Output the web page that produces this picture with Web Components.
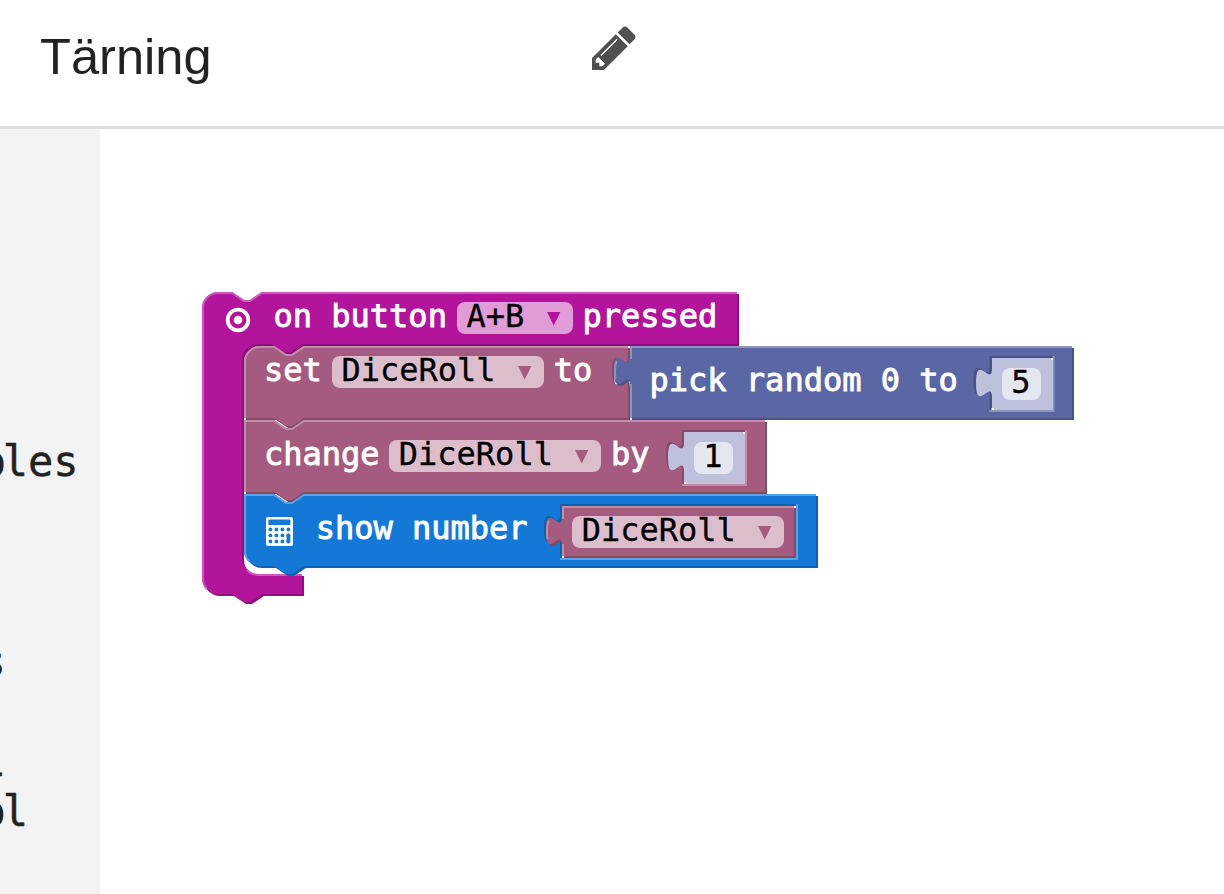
<!DOCTYPE html>
<html lang="sv">
<head>
<meta charset="utf-8">
<title>Tärning</title>
<style>
  body { margin: 0; background: #fff; overflow: hidden; }
</style>
</head>
<body>
<editor-app></editor-app>
<script>
class Base extends HTMLElement {
  connectedCallback() {
    if (!this.shadowRoot) this.attachShadow({ mode: 'open' }).innerHTML = this.render();
  }
}

/* Block palette: fill, highlight edge, shaded edge, field background */
const PALETTE = {
  event:  { fill: '#b2159b', light: '#cb5bba', dark: '#8f107c', field: '#e19bd7' },
  vars:   { fill: '#a55b80', light: '#c08ca6', dark: '#844966', field: '#dbbdcc' },
  math:   { fill: '#5b67a5', light: '#8c95c0', dark: '#495284', field: '#bdc2db' },
  led:    { fill: '#1478d6', light: '#5aa1e2', dark: '#1060ab', field: '#a1c9ef' },
  shadow: { fill: '#bdc1dc', light: '#bdc1dc', dark: '#bdc1dc', field: '#e4e6f0' }
};
const NOTCH = 'l12,8 6,0 12,-8';
const NOTCH_BACK = 'l-12,8 -6,0 -12,-8';
const TAB_DOWN = 'c0,20 -16,-16 -16,15 s16,-5 16,15';
const TAB_UP = 'c0,-20 -16,16 -16,-15 s16,5 16,-15';

function shapeFor(kind, w, h) {
  switch (kind) {
    case 'wrap': return {
      p: `M0,16A16,16 0 0 1 16,0H30${NOTCH}H${w}V52H100${NOTCH_BACK}H56a16,16 0 0 0 -16,16V266a16,16 0 0 0 16,16H100V${h}H60${NOTCH_BACK}H16a16,16 0 0 1 -16,-16z`,
      l: `M5,${h - 5}A15,15 0 0 1 1,${h - 16}V16A15,15 0 0 1 16,1H30${NOTCH}H${w}M45,278A15,15 0 0 0 56,283H100`
    };
    case 'first': return {
      p: `M0,16A16,16 0 0 1 16,0H30${NOTCH}H${w}V10${TAB_DOWN}V${h}H60${NOTCH_BACK}H0z`,
      l: `M1,${h}V16A15,15 0 0 1 16,1H30${NOTCH}H${w}`
    };
    case 'middle': return {
      p: `M0,0H30${NOTCH}H${w}V${h}H60${NOTCH_BACK}H0z`,
      l: `M1,${h}V1H30${NOTCH}H${w}`
    };
    case 'last': return {
      p: `M0,0H30${NOTCH}H${w}V${h}H60${NOTCH_BACK}H16a16,16 0 0 1 -16,-16z`,
      l: `M5,${h - 5}A15,15 0 0 1 1,${h - 16}V1H30${NOTCH}H${w}`
    };
    default: return {
      p: `M0,0H${w}V${h}H0V40${TAB_UP}z`,
      l: `M1,${h}V38M1,13V1H${w}M-14.4,33Q-16,22 -13.4,14.6`
    };
  }
}

/* A puzzle block: bevelled outline behind a slotted row of fields */
customElements.define('code-block', class extends Base {
  render() {
    const kind = this.getAttribute('kind');
    const w = +this.getAttribute('w'), h = +this.getAttribute('h');
    const c = PALETTE[this.getAttribute('tone')];
    const s = shapeFor(kind, w - 2, h - 2);
    let hole = '';
    if (this.hasAttribute('hole')) {
      const [x, hw] = this.getAttribute('hole').split(',').map(Number);
      hole = `<path fill="${c.dark}" d="M${x},10h${hw + 2}v54h${-hw - 2}v-14${TAB_UP}z"/>
        <path fill="none" stroke="${c.light}" stroke-width="2" d="M${x},65h${hw + 3}V10"/>
        <path fill="#fff" d="M${x + hw},12h2v2h-2zM${x + 2},62h2v2h-2z"/>`;
    }
    const paint = this.getAttribute('tone') === 'shadow'
      ? `<path fill="${c.fill}" d="${shapeFor(kind, w, h).p}"/><path fill="#fff" d="M${w - 2},0h2v2h-2zM0,${h - 2}h2v2h-2z"/>`
      : `<path fill="${c.dark}" transform="translate(2,2)" d="${s.p}"/>
         <path fill="${c.fill}" d="${s.p}"/>
         <path fill="none" stroke="${c.light}" stroke-width="2" d="${s.l}"/>`;
    return `<style>
      :host { display: block; position: relative; flex: none; box-sizing: border-box; width: ${w}px; height: ${h}px;
              margin: var(--y, 0) 0 0 var(--x, 0); --field: ${c.field}; --arrow: ${c.fill}; }
      svg { position: absolute; left: 0; top: 0; overflow: visible; }
      .row { position: relative; display: flex; align-items: flex-start; }
      .body { position: relative; display: flex; flex-direction: column; padding-left: 42px; }
      .wrap { height: 54px; }
    </style>
    <svg width="${w}" height="${h}">${paint}${hole}</svg>
    <div class="row ${kind}"><slot></slot></div>
    <div class="body"><slot name="body"></slot></div>`;
  }
});

customElements.define('block-label', class extends Base {
  render() {
    return `<style>
      :host { display: block; flex: none; margin: var(--y, 0) 0 0 var(--x, 0); white-space: pre;
              font: 32px/28px "DejaVu Sans Mono", monospace; color: #fff; -webkit-text-stroke: 0.9px #fff; }
    </style><slot></slot>`;
  }
});

customElements.define('block-field', class extends Base {
  render() {
    const arrow = this.hasAttribute('menu')
      ? '<svg width="14" height="14" viewBox="0 0 14 14"><path d="M0,0H13.4L6.7,13.4z"/></svg>' : '';
    return `<style>
      :host { display: flex; flex: none; box-sizing: border-box; width: ${this.getAttribute('w')}px; height: 32px;
              margin: var(--y, 0) 0 0 var(--x, 0); padding: 0 12px 0 9.7px; justify-content: space-between;
              border-radius: 8px; background: var(--field); color: #000;
              font: 32px/28px "DejaVu Sans Mono", monospace; -webkit-text-stroke: 0.3px #000; }
      svg { margin-top: 10px; fill: var(--arrow); }
    </style><span><slot></slot></span>${arrow}`;
  }
});

customElements.define('block-icon', class extends Base {
  render() {
    const art = this.getAttribute('name') === 'target'
      ? `<svg width="26" height="26" viewBox="0 0 26 26"><circle cx="13" cy="13" r="10.3" fill="none" stroke="#fff" stroke-width="3.8"/><circle cx="13" cy="13" r="4.3" fill="#fff"/></svg>`
      : `<svg width="27" height="29" viewBox="0 0 27 29"><rect width="27" height="29" rx="2" fill="#fff"/>
         <g fill="#1478d6"><rect x="2.4" y="2.6" width="22" height="5.4" rx=".6"/>
         ${[12.4, 18.4, 24.4].map(y => [4.4, 10.4, 16.4, 22.4].map(x => `<circle cx="${x}" cy="${y}" r="1.9"/>`).join('')).join('')}
         <rect x="20.5" y="16.5" width="3.8" height="9.8" rx="1.6"/></g></svg>`;
    return `<style>:host { display: block; flex: none; margin: var(--y, 0) 0 0 var(--x, 0); } svg { display: block; }</style>${art}`;
  }
});

customElements.define('title-bar', class extends Base {
  render() {
    return `<style>
      :host { display: flex; align-items: flex-start; box-sizing: border-box; height: 129px; padding-left: 40px;
              border-bottom: 3px solid #dedede; background: #fff; }
      h1 { margin: 28px 0 0; width: 552px; font: 400 50.6px/58px "Liberation Sans", Arial, sans-serif; color: #222; }
      svg { margin-top: 26px; fill: #505050; }
    </style>
    <h1><slot></slot></h1>
    <svg width="44" height="44" viewBox="0 0 1536 1536"><path d="M363 1408l91-91-235-235-91 91v107h128v128h107zM886 480q0-22-22-22-10 0-17 7l-542 542q-7 7-7 17 0 22 22 22 10 0 17-7l542-542q7-7 7-17zM832 288l416 416-832 832h-416v-416zM1515 384q0 53-37 90l-166 166-416-416 166-165q36-38 90-38 53 0 91 38l235 234q37 39 37 91z"/></svg>`;
  }
});

customElements.define('tool-box', class extends Base {
  render() {
    return `<style>
      :host { display: flex; flex-direction: column; flex: none; box-sizing: border-box; width: 100px; overflow: hidden;
              padding-top: 308px; background: #f3f3f3; color: #222; font: 42px/50px "DejaVu Sans Mono", monospace;
              -webkit-text-stroke: 0.4px #222; }
      div { margin-left: -146px; white-space: pre; }
      span { letter-spacing: -3px; }
      .gap { margin-top: 150px; }
      .gap2 { margin-top: 50px; }
    </style>
    <div>Varia<span>b</span>les</div><div class="gap">Images</div><div class="gap2">Serial</div><div>Contr<span>o</span>l</div>`;
  }
});

customElements.define('work-space', class extends Base {
  render() {
    return `<style>
      :host { display: block; flex: 1; position: relative; background: #fff; }
      ::slotted(code-block) { position: absolute; left: 102px; top: 163px; }
    </style><slot></slot>`;
  }
});

customElements.define('editor-app', class extends Base {
  render() {
    return `<style>
      :host { display: flex; flex-direction: column; width: 1224px; height: 894px; overflow: hidden; }
      main { display: flex; flex: 1; min-height: 0; }
    </style>
    <title-bar>Tärning</title-bar>
    <main>
      <tool-box></tool-box>
      <work-space>
        <code-block kind="wrap" tone="event" w="537" h="304">
          <block-icon name="target" style="--x:23px;--y:15px"></block-icon>
          <block-label style="--x:22.5px;--y:10px">on button</block-label>
          <block-field menu w="116" style="--x:10px;--y:10px">A+B</block-field>
          <block-label style="--x:9.5px;--y:10px">pressed</block-label>
          <code-block slot="body" kind="first" tone="vars" w="386" h="74">
            <block-label style="--x:20px;--y:10px">set</block-label>
            <block-field menu w="212" style="--x:10px;--y:10px">DiceRoll</block-field>
            <block-label style="--x:10px;--y:10px">to</block-label>
            <code-block kind="value" tone="math" w="444" h="74" hole="359.5,61" style="--x:37.7px">
              <block-label style="--x:19.5px;--y:20px">pick random 0 to</block-label>
              <code-block kind="value" tone="shadow" w="61" h="52" style="--x:33.8px;--y:12px">
                <block-field w="39" style="--x:10px;--y:10px">5</block-field>
              </code-block>
            </code-block>
          </code-block>
          <code-block slot="body" kind="middle" tone="vars" w="523" h="74" hole="438,61">
            <block-label style="--x:20px;--y:20px">change</block-label>
            <block-field menu w="212" style="--x:9.5px;--y:20px">DiceRoll</block-field>
            <block-label style="--x:10px;--y:20px">by</block-label>
            <code-block kind="value" tone="shadow" w="61" h="52" style="--x:34px;--y:12px">
              <block-field w="39" style="--x:10px;--y:10px">1</block-field>
            </code-block>
          </code-block>
          <code-block slot="body" kind="last" tone="led" w="574" h="74" hole="316,234">
            <block-icon name="calc" style="--x:21.5px;--y:23.3px"></block-icon>
            <block-label style="--x:23.2px;--y:20px">show number</block-label>
            <code-block kind="value" tone="vars" w="234" h="52" style="--x:34.4px;--y:12px">
              <block-field menu w="212" style="--x:10px;--y:10px">DiceRoll</block-field>
            </code-block>
          </code-block>
        </code-block>
      </work-space>
    </main>`;
  }
});
</script>
</body>
</html>
